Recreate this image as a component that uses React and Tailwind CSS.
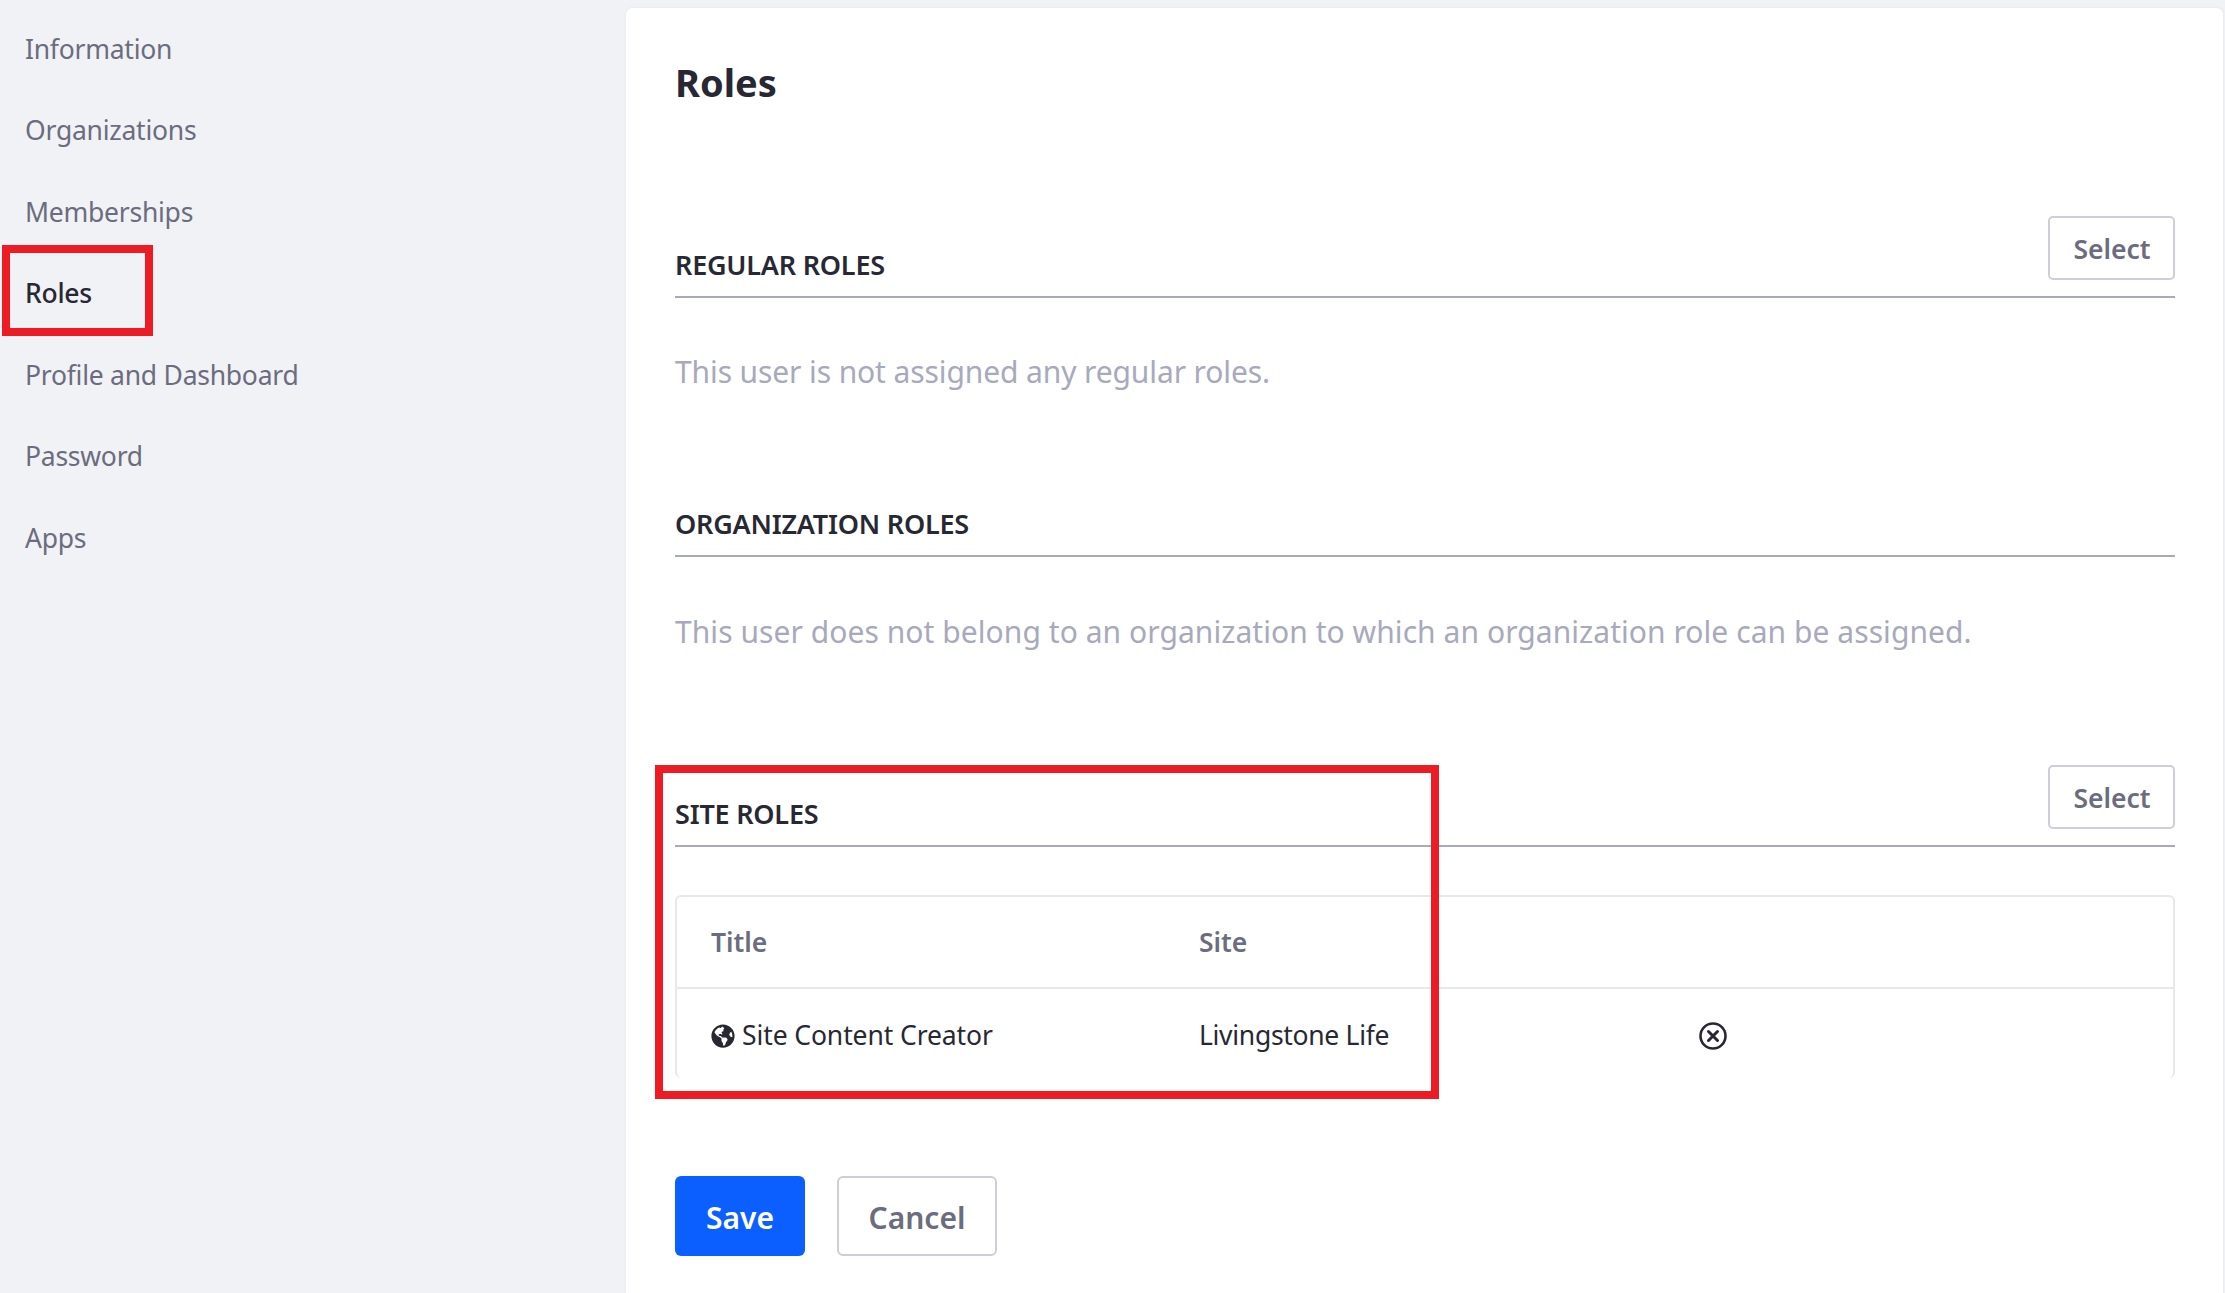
import React from "react";
import { FaGlobeAmericas } from "react-icons/fa";

const nav = ["Information", "Organizations", "Memberships", "Roles", "Profile and Dashboard", "Password", "Apps"];

function SelectButton() {
  return (
    <button className="w-[127px] h-[64px] rounded-[5px] border-2 border-[#cdced9] bg-white pt-[3px] pl-[1px] text-[#6b6c7e] text-[26.5px] font-semibold leading-none">
      Select
    </button>
  );
}

function SectionHead({ title, action, className }) {
  return (
    <div className={"flex justify-between border-b-2 border-[#a7a9bc] " + className}>
      <h2 className="text-[27px] font-semibold leading-[40px] tracking-[-0.22px] text-[#272833]">{title}</h2>
      {action && <SelectButton />}
    </div>
  );
}

export default function App() {
  return (
    <div className="flex h-[1293px] overflow-hidden bg-[#f1f2f6] font-['Noto_Sans',sans-serif]">
      <aside className="relative w-[626px] shrink-0 pt-[9px]">
        <ul>
          {nav.map((n) => (
            <li key={n} className={"flex h-[81.5px] items-center pl-[25px] text-[26.5px] tracking-[-0.25px] " + (n === "Roles" ? "font-medium text-[#272833]" : "text-[#6b6c7e]")}>
              {n}
            </li>
          ))}
        </ul>
        <div className="absolute left-[2px] top-[245px] h-[91px] w-[151px] border-[8px] border-[#ed1c24]" />
      </aside>
      <main className="relative mt-2 mr-[2px] flex-1 rounded-t-[6px] bg-white pl-[49px] pr-[48px] pt-[50px] shadow-[0_0_2px_rgba(39,40,51,0.1)]">
        <h1 className="text-[38px] font-bold leading-[48px] text-[#272833]">Roles</h1>

        <SectionHead title="REGULAR ROLES" action className="mt-[110px] items-end pb-[16px] [&>h2]:mb-[-5px]" />
        <p className="mt-[54px] text-[30px] leading-[40px] tracking-[-0.11px] text-[#a7a9bc]">This user is not assigned any regular roles.</p>

        <SectionHead title="ORGANIZATION ROLES" className="mt-[112px] pb-[11px]" />
        <p className="mt-[55px] text-[30px] leading-[40px] tracking-[0.06px] text-[#a7a9bc]">This user does not belong to an organization to which an organization role can be assigned.</p>

        <SectionHead title="SITE ROLES" action className="mt-[113px] items-end pb-[16px] [&>h2]:mb-[-5px]" />

        <div className="mt-[48px] h-[183px] rounded-[6px] border-x-2 border-t-2 border-[#e7e7ed] text-[26.5px]">
          <div className="grid h-[92px] grid-cols-[488px_499px_1fr] items-center border-b-2 border-[#e7e7ed] pl-[34px] pt-[2px] font-semibold text-[#6b6c7e]">
            <span>Title</span>
            <span>Site</span>
          </div>
          <div className="grid h-[89px] grid-cols-[488px_500px_1fr] items-center pl-[34px] pt-[4px] text-[#272833]">
            <span className="flex items-center gap-[7px] tracking-[-0.1px]">
              <FaGlobeAmericas className="h-6 w-6" />
              Site Content Creator
            </span>
            <span className="tracking-[-0.3px]">Livingstone Life</span>
            <svg viewBox="0 0 28 28" className="h-7 w-7" fill="none" stroke="#272833">
              <circle cx="14" cy="14" r="12.5" strokeWidth="2.6" />
              <path d="M9.5 9.5l9 9M18.5 9.5l-9 9" strokeWidth="3" strokeLinecap="round" />
            </svg>
          </div>
        </div>

        <div className="mt-[98px] flex gap-8">
          <button className="h-[80px] w-[130px] rounded-[6px] bg-[#0b5fff] pt-[2px] text-[30px] font-semibold text-white">Save</button>
          <button className="h-[80px] w-[160px] rounded-[6px] border-2 border-[#cdced9] bg-white pt-[2px] text-[30px] font-semibold text-[#6b6c7e]">Cancel</button>
        </div>

        <div className="absolute left-[29px] top-[757px] h-[334px] w-[784px] border-[8px] border-[#ed1c24]" />
      </main>
    </div>
  );
}
